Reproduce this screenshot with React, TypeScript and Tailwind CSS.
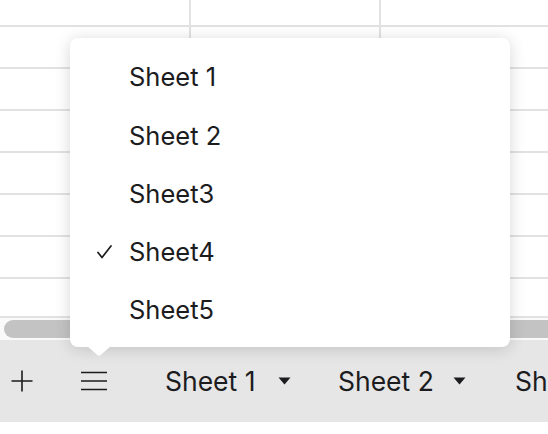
const rows = [27, 42, 42, 42, 42, 42, 42, 37];
const sheets = ['Sheet 1', 'Sheet 2', 'Sheet3', 'Sheet4', 'Sheet5'];
const active = 'Sheet4';

function Caret() {
  return (
    <svg width="13" height="8" viewBox="0 0 13 8" className="shrink-0">
      <path d="M0.5 0.5 L12.5 0.5 L6.5 7.5 Z" fill="#1c1c1e" />
    </svg>
  );
}

export default function App() {
  return (
    <div
      className="relative w-[548px] h-[434px] overflow-hidden bg-white text-[#1c1c1e]"
      style={{ fontFamily: 'Inter, "Noto Sans", sans-serif' }}
    >
      {/* grid */}
      <div className="flex flex-col">
        {rows.map((h, i) => (
          <div
            key={i}
            className={`flex ${i < rows.length - 1 ? 'border-b-2 border-[#e2e2e2]' : ''}`}
            style={{ height: h }}
          >
            <div className="w-[191px] shrink-0 border-r-2 border-[#e2e2e2]" />
            <div className="w-[190px] shrink-0 border-r-2 border-[#e2e2e2]" />
            <div className="flex-1" />
          </div>
        ))}
      </div>

      {/* scrollbar */}
      <div className="h-[24px] border-t-2 border-[#e2e2e2] bg-[#fafafa] flex items-center pl-[4px]">
        <div className="h-[18px] flex-1 rounded-l-full bg-[#c3c3c3]" />
      </div>

      {/* bottom bar */}
      <div className="h-[82px] bg-[#e6e6e6] flex items-center overflow-hidden">
        <div className="w-[66px] shrink-0 pl-[11px] flex items-center">
          <svg width="22" height="22" viewBox="0 0 22 22">
            <path d="M11 0.5 V21.5 M0.5 11 H21.5" stroke="#1c1c1e" strokeWidth="1.6" fill="none" />
          </svg>
        </div>
        <div className="w-[99px] shrink-0 pl-[15px] flex items-center">
          <svg width="26" height="20" viewBox="0 0 26 20">
            <path d="M0 1.5 H26 M0 10 H26 M0 18.5 H26" stroke="#1c1c1e" strokeWidth="1.6" fill="none" />
          </svg>
        </div>
        <div className="flex items-center gap-[23px] w-[173px] shrink-0">
          <span className="text-[26.5px] leading-none whitespace-nowrap">Sheet 1</span>
          <Caret />
        </div>
        <div className="flex items-center gap-[19px] w-[177px] shrink-0">
          <span className="text-[26.5px] leading-none whitespace-nowrap">Sheet 2</span>
          <Caret />
        </div>
        <span className="text-[26.5px] leading-none whitespace-nowrap shrink-0">Sheet3</span>
      </div>

      {/* sheet list popup */}
      <div className="absolute left-[70px] top-[38px] w-[440px] h-[309px] rounded-lg bg-white shadow-[0_2px_16px_rgba(0,0,0,0.16)] pt-[10px] pb-[8px]">
        {sheets.map((s) => (
          <div key={s} className="h-[58.2px] flex items-center">
            <div className="w-[59px] shrink-0 flex pl-[27px]">
              {s === active && (
                <svg width="15" height="14" viewBox="0 0 15 14">
                  <path
                    d="M1 7.5 L5 12.5 L14 1"
                    stroke="#1c1c1e"
                    strokeWidth="1.7"
                    fill="none"
                    strokeLinecap="round"
                    strokeLinejoin="round"
                  />
                </svg>
              )}
            </div>
            <span className="text-[25.5px] leading-none">{s}</span>
          </div>
        ))}
        <svg
          width="24"
          height="10"
          viewBox="0 0 24 10"
          className="absolute left-[17px] top-full -mt-[1px]"
        >
          <path d="M0 0 L24 0 L13 9.5 L11 9.5 Z" fill="#ffffff" />
        </svg>
      </div>
    </div>
  );
}
